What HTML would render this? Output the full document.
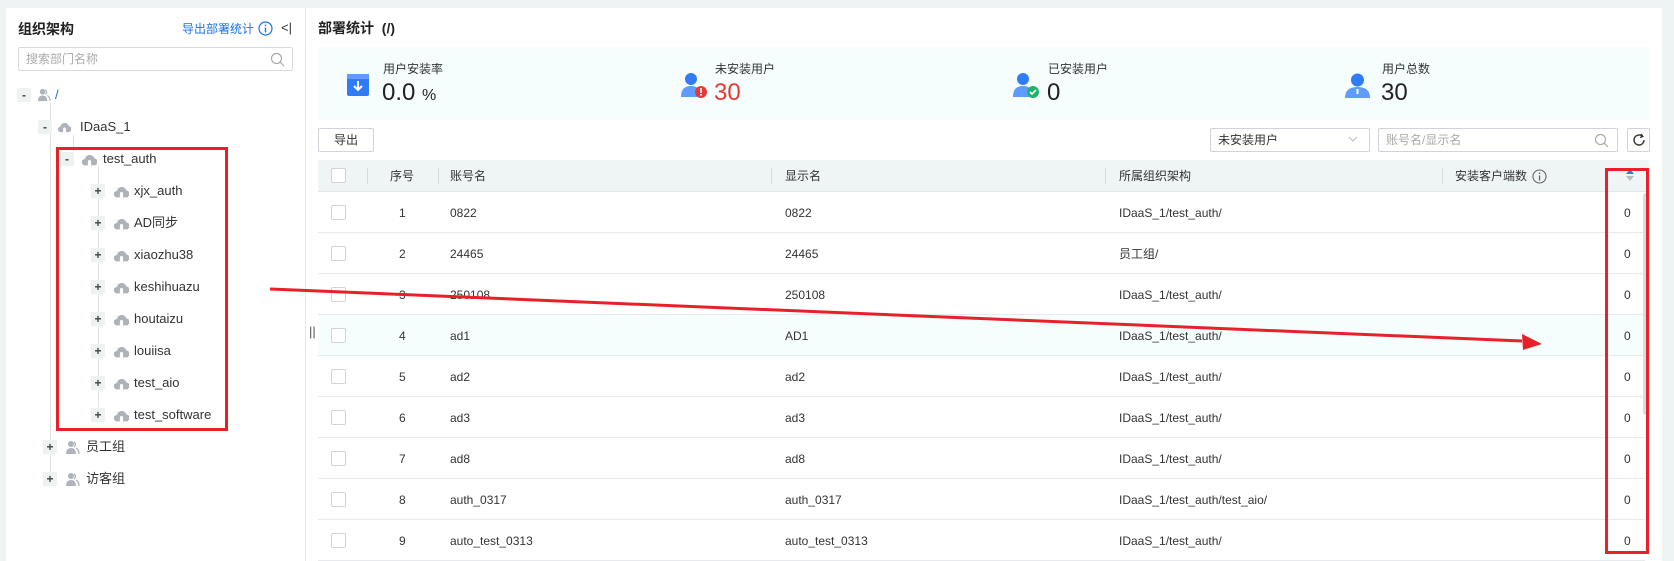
<!DOCTYPE html>
<html><head><meta charset="utf-8"><style>
*{box-sizing:border-box;margin:0;padding:0}
body{width:1674px;height:561px;background:#eef4f3;font-family:"Liberation Sans","Noto Sans CJK SC",sans-serif;color:#333;position:relative;overflow:hidden;font-size:12px}
.abs{position:absolute}
.left{left:6px;top:8px;width:299px;height:553px;background:#fff}
.right{left:306px;top:8px;width:1356px;height:553px;background:#fff}
.t{position:absolute;white-space:nowrap;line-height:16px}
.tn{position:absolute;white-space:nowrap;font-size:13px;line-height:16px;height:16px}
.tg{position:absolute;width:14px;height:14px;background:#eef3f2;font-size:12px;line-height:14px;text-align:center;font-weight:bold;color:#444}
.vl{position:absolute;width:1px;background:#dde3e3}
.row{position:absolute;left:318px;width:1327px;height:41px;border-bottom:1px solid #e6e9ee}
.cb{position:absolute;left:331px;width:15px;height:15px;border:1px solid #d0d4da;background:#fff;border-radius:2px}
.cell{position:absolute;font-size:12px;color:#333;line-height:14px}
.cl{position:absolute}
</style></head><body>
<svg width="0" height="0" style="position:absolute"><defs><symbol id="cloud" viewBox="0 0 14 12"><path d="M3 11.5a3 3 0 0 1-.3-6A4.5 4.5 0 0 1 11.5 5a3.2 3.2 0 0 1-.5 6.5z" fill="#aeb3ba"/><path d="M5.5 11.5V8a1.5 1.5 0 0 1 3 0v3.5" fill="#fff"/></symbol>
<symbol id="ppl" viewBox="0 0 15 15"><circle cx="6" cy="4" r="3" fill="#aeb3ba"/><path d="M1 14c0-4 2-6 5-6s5 2 5 6z" fill="#aeb3ba"/><path d="M9 2a3 3 0 0 1 0 5M11 8c2 1 3 3 3 6" stroke="#aeb3ba" stroke-width="1.3" fill="none"/></symbol></defs></svg>
<div class="abs left"></div>
<div class="abs right"></div>
<div class="abs" style="left:305px;top:8px;width:1px;height:553px;background:#e4e8e8"></div>

<div class="t" style="left:18px;top:21px;font-size:14px;font-weight:bold;color:#222">组织架构</div>
<div class="t" style="left:182px;top:21px;font-size:12px;color:#1a73e8">导出部署统计</div>
<svg class="abs" style="left:258px;top:21px" width="15" height="15"><circle cx="7.5" cy="7.5" r="6.5" fill="none" stroke="#1a73e8" stroke-width="1.2"/><rect x="6.8" y="6.5" width="1.4" height="5" fill="#1a73e8"/><rect x="6.8" y="3.6" width="1.4" height="1.5" fill="#1a73e8"/></svg>
<div class="t" style="left:281px;top:20px;font-size:13px;color:#333">&lt;|</div>
<div class="abs" style="left:18px;top:47px;width:275px;height:24px;border:1px solid #d7dbdf;border-radius:2px"></div>
<div class="t" style="left:26px;top:51px;font-size:12px;color:#aaa">搜索部门名称</div>
<svg class="abs" style="left:270px;top:52px" width="15" height="15"><circle cx="6.5" cy="6.5" r="5" fill="none" stroke="#aaa" stroke-width="1.2"/><path d="M10 10l4 4" stroke="#aaa" stroke-width="1.2"/></svg>

<div class="vl" style="left:50px;top:103px;height:370px"></div>
<div class="vl" style="left:73px;top:135px;height:16px"></div>
<div class="vl" style="left:98px;top:167px;height:240px"></div>

<div class="tg" style="left:17px;top:88px">-</div>
<svg class="abs" style="left:37px;top:88px" width="14" height="14"><use href="#ppl"/></svg>
<div class="tn" style="left:55px;top:87px;color:#1a73e8">/</div>

<div class="tg" style="left:38px;top:120px">-</div>
<svg class="cl" style="left:58px;top:121px" width="13" height="12"><use href="#cloud"/></svg>
<div class="tn" style="left:80px;top:119px">IDaaS_1</div>

<div class="tg" style="left:60px;top:152px">-</div>
<svg class="cl" style="left:82px;top:153px" width="15" height="13"><use href="#cloud"/></svg>
<div class="tn" style="left:103px;top:151px">test_auth</div>

<div class="tg" style="left:91px;top:184px">+</div><svg class="cl" style="left:114px;top:185px" width="15" height="13"><use href="#cloud"/></svg><div class="tn" style="left:134px;top:183px">xjx_auth</div>
<div class="tg" style="left:91px;top:216px">+</div><svg class="cl" style="left:114px;top:217px" width="15" height="13"><use href="#cloud"/></svg><div class="tn" style="left:134px;top:215px">AD同步</div>
<div class="tg" style="left:91px;top:248px">+</div><svg class="cl" style="left:114px;top:249px" width="15" height="13"><use href="#cloud"/></svg><div class="tn" style="left:134px;top:247px">xiaozhu38</div>
<div class="tg" style="left:91px;top:280px">+</div><svg class="cl" style="left:114px;top:281px" width="15" height="13"><use href="#cloud"/></svg><div class="tn" style="left:134px;top:279px">keshihuazu</div>
<div class="tg" style="left:91px;top:312px">+</div><svg class="cl" style="left:114px;top:313px" width="15" height="13"><use href="#cloud"/></svg><div class="tn" style="left:134px;top:311px">houtaizu</div>
<div class="tg" style="left:91px;top:344px">+</div><svg class="cl" style="left:114px;top:345px" width="15" height="13"><use href="#cloud"/></svg><div class="tn" style="left:134px;top:343px">louiisa</div>
<div class="tg" style="left:91px;top:376px">+</div><svg class="cl" style="left:114px;top:377px" width="15" height="13"><use href="#cloud"/></svg><div class="tn" style="left:134px;top:375px">test_aio</div>
<div class="tg" style="left:91px;top:408px">+</div><svg class="cl" style="left:114px;top:409px" width="15" height="13"><use href="#cloud"/></svg><div class="tn" style="left:134px;top:407px">test_software</div>

<div class="tg" style="left:43px;top:440px">+</div>
<svg class="abs" style="left:65px;top:440px" width="15" height="15"><use href="#ppl"/></svg>
<div class="tn" style="left:86px;top:439px">员工组</div>
<div class="tg" style="left:43px;top:472px">+</div>
<svg class="abs" style="left:65px;top:472px" width="15" height="15"><use href="#ppl"/></svg>
<div class="tn" style="left:86px;top:471px">访客组</div>

<div class="t" style="left:318px;top:20px;font-size:14px;font-weight:bold;color:#222">部署统计 &nbsp;(/)</div>
<div class="abs" style="left:318px;top:47px;width:1331px;height:73px;background:#f5fdfd"></div>
<svg class="abs" style="left:346px;top:73px" width="24" height="24"><rect x="1" y="1" width="22" height="22" rx="2" fill="#2f7cf6"/><rect x="1" y="1" width="22" height="5" fill="#5e9cff"/><path d="M12 8v9M8 13l4 4 4-4" stroke="#fff" stroke-width="2" fill="none"/></svg>
<div class="t" style="left:383px;top:61px;font-size:12px">用户安装率</div>
<div class="t" style="left:382px;top:80px;font-size:24px;line-height:26px;color:#222">0.0 <span style="font-size:16px">%</span></div>
<svg class="abs" style="left:680px;top:72px" width="28" height="28"><circle cx="11" cy="7" r="6" fill="#2f7cf6"/><path d="M1 25c0-8 4-11 10-11s10 3 10 11z" fill="#5e9cff"/><circle cx="21" cy="20" r="6" fill="#e53935"/><rect x="20.2" y="16" width="1.6" height="5" fill="#fff"/><rect x="20.2" y="22" width="1.6" height="1.6" fill="#fff"/></svg>
<div class="t" style="left:715px;top:61px;font-size:12px">未安装用户</div>
<div class="t" style="left:714px;top:80px;font-size:24px;line-height:26px;color:#e53935">30</div>
<svg class="abs" style="left:1012px;top:72px" width="28" height="28"><circle cx="11" cy="7" r="6" fill="#2f7cf6"/><path d="M1 25c0-8 4-11 10-11s10 3 10 11z" fill="#5e9cff"/><circle cx="21" cy="20" r="6" fill="#20b26b"/><path d="M18 20l2 2 4-4" stroke="#fff" stroke-width="1.6" fill="none"/></svg>
<div class="t" style="left:1048px;top:61px;font-size:12px">已安装用户</div>
<div class="t" style="left:1047px;top:80px;font-size:24px;line-height:26px;color:#222">0</div>
<svg class="abs" style="left:1345px;top:73px" width="25" height="25"><circle cx="12.5" cy="7" r="6.5" fill="#2f7cf6"/><path d="M0 25c0-8 5-11 12.5-11S25 17 25 25z" fill="#5e9cff"/><rect x="11.5" y="16" width="2" height="5" fill="#fff"/></svg>
<div class="t" style="left:1382px;top:61px;font-size:12px">用户总数</div>
<div class="t" style="left:1381px;top:80px;font-size:24px;line-height:26px;color:#222">30</div>

<div class="abs" style="left:318px;top:128px;width:56px;height:24px;border:1px solid #d0d4da;border-radius:2px;text-align:center;line-height:22px;font-size:12px">导出</div>
<div class="abs" style="left:1210px;top:128px;width:160px;height:24px;border:1px solid #d0d4da;border-radius:2px"></div>
<div class="t" style="left:1218px;top:132px;font-size:12px">未安装用户</div>
<svg class="abs" style="left:1348px;top:135px" width="10" height="8"><path d="M1 2l4 4 4-4" stroke="#bbb" fill="none"/></svg>
<div class="abs" style="left:1378px;top:128px;width:240px;height:24px;border:1px solid #d0d4da;border-radius:2px"></div>
<div class="t" style="left:1386px;top:132px;font-size:12px;color:#aaa">账号名/显示名</div>
<svg class="abs" style="left:1594px;top:133px" width="15" height="15"><circle cx="6.5" cy="6.5" r="5" fill="none" stroke="#aaa" stroke-width="1.2"/><path d="M10 10l4 4" stroke="#aaa" stroke-width="1.2"/></svg>
<div class="abs" style="left:1627px;top:128px;width:23px;height:24px;border:1px solid #d0d4da;border-radius:2px"></div>
<svg class="abs" style="left:1632px;top:133px" width="14" height="14"><path d="M12 7a5 5 0 1 1-2-4" stroke="#333" stroke-width="1.4" fill="none"/><path d="M9 1l2 2.5-3 1" stroke="#333" stroke-width="1.2" fill="none"/></svg>

<div class="abs" style="left:318px;top:160px;width:1331px;height:32px;background:#eef5f4;border-bottom:1px solid #e3e7ea"></div>
<div class="cb" style="top:168px"></div>
<div class="abs" style="left:367px;top:168px;width:1px;height:16px;background:#d6dbdd"></div>
<div class="abs" style="left:438px;top:168px;width:1px;height:16px;background:#d6dbdd"></div>
<div class="abs" style="left:771px;top:168px;width:1px;height:16px;background:#d6dbdd"></div>
<div class="abs" style="left:1105px;top:168px;width:1px;height:16px;background:#d6dbdd"></div>
<div class="abs" style="left:1442px;top:168px;width:1px;height:16px;background:#d6dbdd"></div>
<div class="cell" style="left:390px;top:169px">序号</div>
<div class="cell" style="left:450px;top:169px">账号名</div>
<div class="cell" style="left:785px;top:169px">显示名</div>
<div class="cell" style="left:1119px;top:169px">所属组织架构</div>
<div class="cell" style="left:1455px;top:169px">安装客户端数</div>
<svg class="abs" style="left:1532px;top:169px" width="15" height="15"><circle cx="7.5" cy="7.5" r="6.5" fill="none" stroke="#666" stroke-width="1.1"/><rect x="6.9" y="6.5" width="1.3" height="5" fill="#666"/><rect x="6.9" y="3.6" width="1.3" height="1.4" fill="#666"/></svg>
<svg class="abs" style="left:1626px;top:169px" width="8" height="12"><path d="M0 5l4-5 4 5z" fill="#2f7cf6"/><path d="M0 7l4 5 4-5z" fill="#bbb"/></svg>

<div class="row" style="top:192px"></div>
<div class="row" style="top:233px"></div>
<div class="row" style="top:274px"></div>
<div class="row" style="top:315px;background:#f5fdfd"></div>
<div class="row" style="top:356px"></div>
<div class="row" style="top:397px"></div>
<div class="row" style="top:438px"></div>
<div class="row" style="top:479px"></div>
<div class="row" style="top:520px"></div>

<div class="cb" style="top:205px"></div><div class="cell" style="left:399px;top:206px">1</div><div class="cell" style="left:450px;top:206px">0822</div><div class="cell" style="left:785px;top:206px">0822</div><div class="cell" style="left:1119px;top:206px">IDaaS_1/test_auth/</div><div class="cell" style="left:1624px;top:206px">0</div>
<div class="cb" style="top:246px"></div><div class="cell" style="left:399px;top:247px">2</div><div class="cell" style="left:450px;top:247px">24465</div><div class="cell" style="left:785px;top:247px">24465</div><div class="cell" style="left:1119px;top:247px">员工组/</div><div class="cell" style="left:1624px;top:247px">0</div>
<div class="cb" style="top:287px"></div><div class="cell" style="left:399px;top:288px">3</div><div class="cell" style="left:450px;top:288px">250108</div><div class="cell" style="left:785px;top:288px">250108</div><div class="cell" style="left:1119px;top:288px">IDaaS_1/test_auth/</div><div class="cell" style="left:1624px;top:288px">0</div>
<div class="cb" style="top:328px"></div><div class="cell" style="left:399px;top:329px">4</div><div class="cell" style="left:450px;top:329px">ad1</div><div class="cell" style="left:785px;top:329px">AD1</div><div class="cell" style="left:1119px;top:329px">IDaaS_1/test_auth/</div><div class="cell" style="left:1624px;top:329px">0</div>
<div class="cb" style="top:369px"></div><div class="cell" style="left:399px;top:370px">5</div><div class="cell" style="left:450px;top:370px">ad2</div><div class="cell" style="left:785px;top:370px">ad2</div><div class="cell" style="left:1119px;top:370px">IDaaS_1/test_auth/</div><div class="cell" style="left:1624px;top:370px">0</div>
<div class="cb" style="top:410px"></div><div class="cell" style="left:399px;top:411px">6</div><div class="cell" style="left:450px;top:411px">ad3</div><div class="cell" style="left:785px;top:411px">ad3</div><div class="cell" style="left:1119px;top:411px">IDaaS_1/test_auth/</div><div class="cell" style="left:1624px;top:411px">0</div>
<div class="cb" style="top:451px"></div><div class="cell" style="left:399px;top:452px">7</div><div class="cell" style="left:450px;top:452px">ad8</div><div class="cell" style="left:785px;top:452px">ad8</div><div class="cell" style="left:1119px;top:452px">IDaaS_1/test_auth/</div><div class="cell" style="left:1624px;top:452px">0</div>
<div class="cb" style="top:492px"></div><div class="cell" style="left:399px;top:493px">8</div><div class="cell" style="left:450px;top:493px">auth_0317</div><div class="cell" style="left:785px;top:493px">auth_0317</div><div class="cell" style="left:1119px;top:493px">IDaaS_1/test_auth/test_aio/</div><div class="cell" style="left:1624px;top:493px">0</div>
<div class="cb" style="top:533px"></div><div class="cell" style="left:399px;top:534px">9</div><div class="cell" style="left:450px;top:534px">auto_test_0313</div><div class="cell" style="left:785px;top:534px">auto_test_0313</div><div class="cell" style="left:1119px;top:534px">IDaaS_1/test_auth/</div><div class="cell" style="left:1624px;top:534px">0</div>

<div class="abs" style="left:1643px;top:193px;width:5px;height:222px;background:#d9dde0;border-radius:3px"></div>
<div class="t" style="left:309px;top:324px;font-size:13px;color:#555">||</div>

<div class="abs" style="left:56px;top:147px;width:172px;height:284px;border:3px solid #e8202a"></div>
<div class="abs" style="left:1605px;top:168px;width:44px;height:386px;border:3px solid #e8202a"></div>
<svg class="abs" style="left:0;top:0" width="1674" height="561"><path d="M270 289L1522 341" stroke="#e8202a" stroke-width="3"/><path d="M1542 344L1522 334L1523 350z" fill="#e8202a"/></svg>
</body></html>
